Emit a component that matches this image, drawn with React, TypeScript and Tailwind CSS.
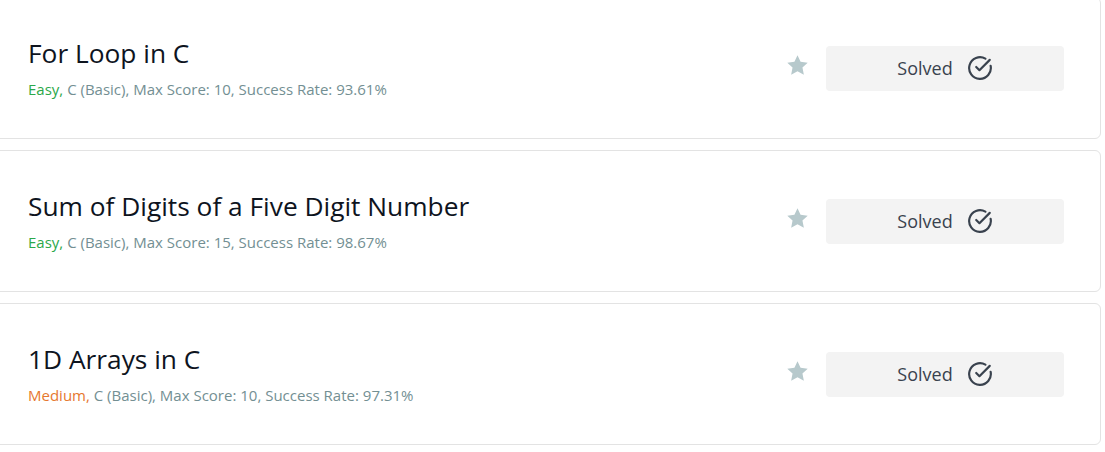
import React from 'react';

type Challenge = {
  title: string;
  difficulty: 'Easy' | 'Medium';
  maxScore: number;
  successRate: string;
};

const challenges: Challenge[] = [
  { title: 'For Loop in C', difficulty: 'Easy', maxScore: 10, successRate: '93.61%' },
  { title: 'Sum of Digits of a Five Digit Number', difficulty: 'Easy', maxScore: 15, successRate: '98.67%' },
  { title: '1D Arrays in C', difficulty: 'Medium', maxScore: 10, successRate: '97.31%' },
];

function StarIcon() {
  return (
    <svg width="25" height="25" viewBox="0 0 24 24" className="text-[#b7c9cc]" fill="currentColor">
      <path d="M12 2.2l2.95 6.3 6.85.8-5.05 4.7 1.35 6.8L12 17.4l-6.1 3.4 1.35-6.8L2.2 9.3l6.85-.8z" />
    </svg>
  );
}

function SolvedIcon() {
  return (
    <svg width="26" height="26" viewBox="0 0 24 24" fill="none" stroke="currentColor" strokeWidth="2" strokeLinecap="round" strokeLinejoin="round">
      <path d="M21.8 10A10 10 0 1 1 17 3.34" />
      <path d="m8.5 11 3 3L21 4.5" />
    </svg>
  );
}

function ChallengeCard({ c }: { c: Challenge }) {
  return (
    <div className="h-[142px] ml-[-8px] mr-[4px] bg-white border border-[#e3e3e3] rounded-md flex items-center justify-between pl-[35px] pr-[36px]">
      <div className="flex flex-col gap-[9px] mt-[-2px]">
        <h4 className="text-[26.3px] leading-[34px] text-[#0e141e]">{c.title}</h4>
        <div className="text-[15px] leading-[20px] text-[#738f93]">
          <span className={c.difficulty === 'Easy' ? 'text-[#2ba84a]' : 'text-[#e6782e]'}>{c.difficulty}, </span>
          C (Basic), Max Score: {c.maxScore}, Success Rate: {c.successRate}
        </div>
      </div>
      <div className="flex items-center gap-[16px]">
        <div className="mt-[-5px]">
          <StarIcon />
        </div>
        <button className="w-[238px] h-[45px] rounded bg-[#f3f3f3] text-[#39424e] flex items-center justify-center gap-[14px] text-[18px]">
          <span>Solved</span>
          <SolvedIcon />
        </button>
      </div>
    </div>
  );
}

export default function App() {
  return (
    <div className="w-[1105px] h-[452px] overflow-hidden bg-white" style={{ fontFamily: '"Open Sans", sans-serif' }}>
      <div className="flex flex-col gap-[11px] mt-[-3px]">
        {challenges.map((c) => (
          <ChallengeCard key={c.title} c={c} />
        ))}
      </div>
    </div>
  );
}
